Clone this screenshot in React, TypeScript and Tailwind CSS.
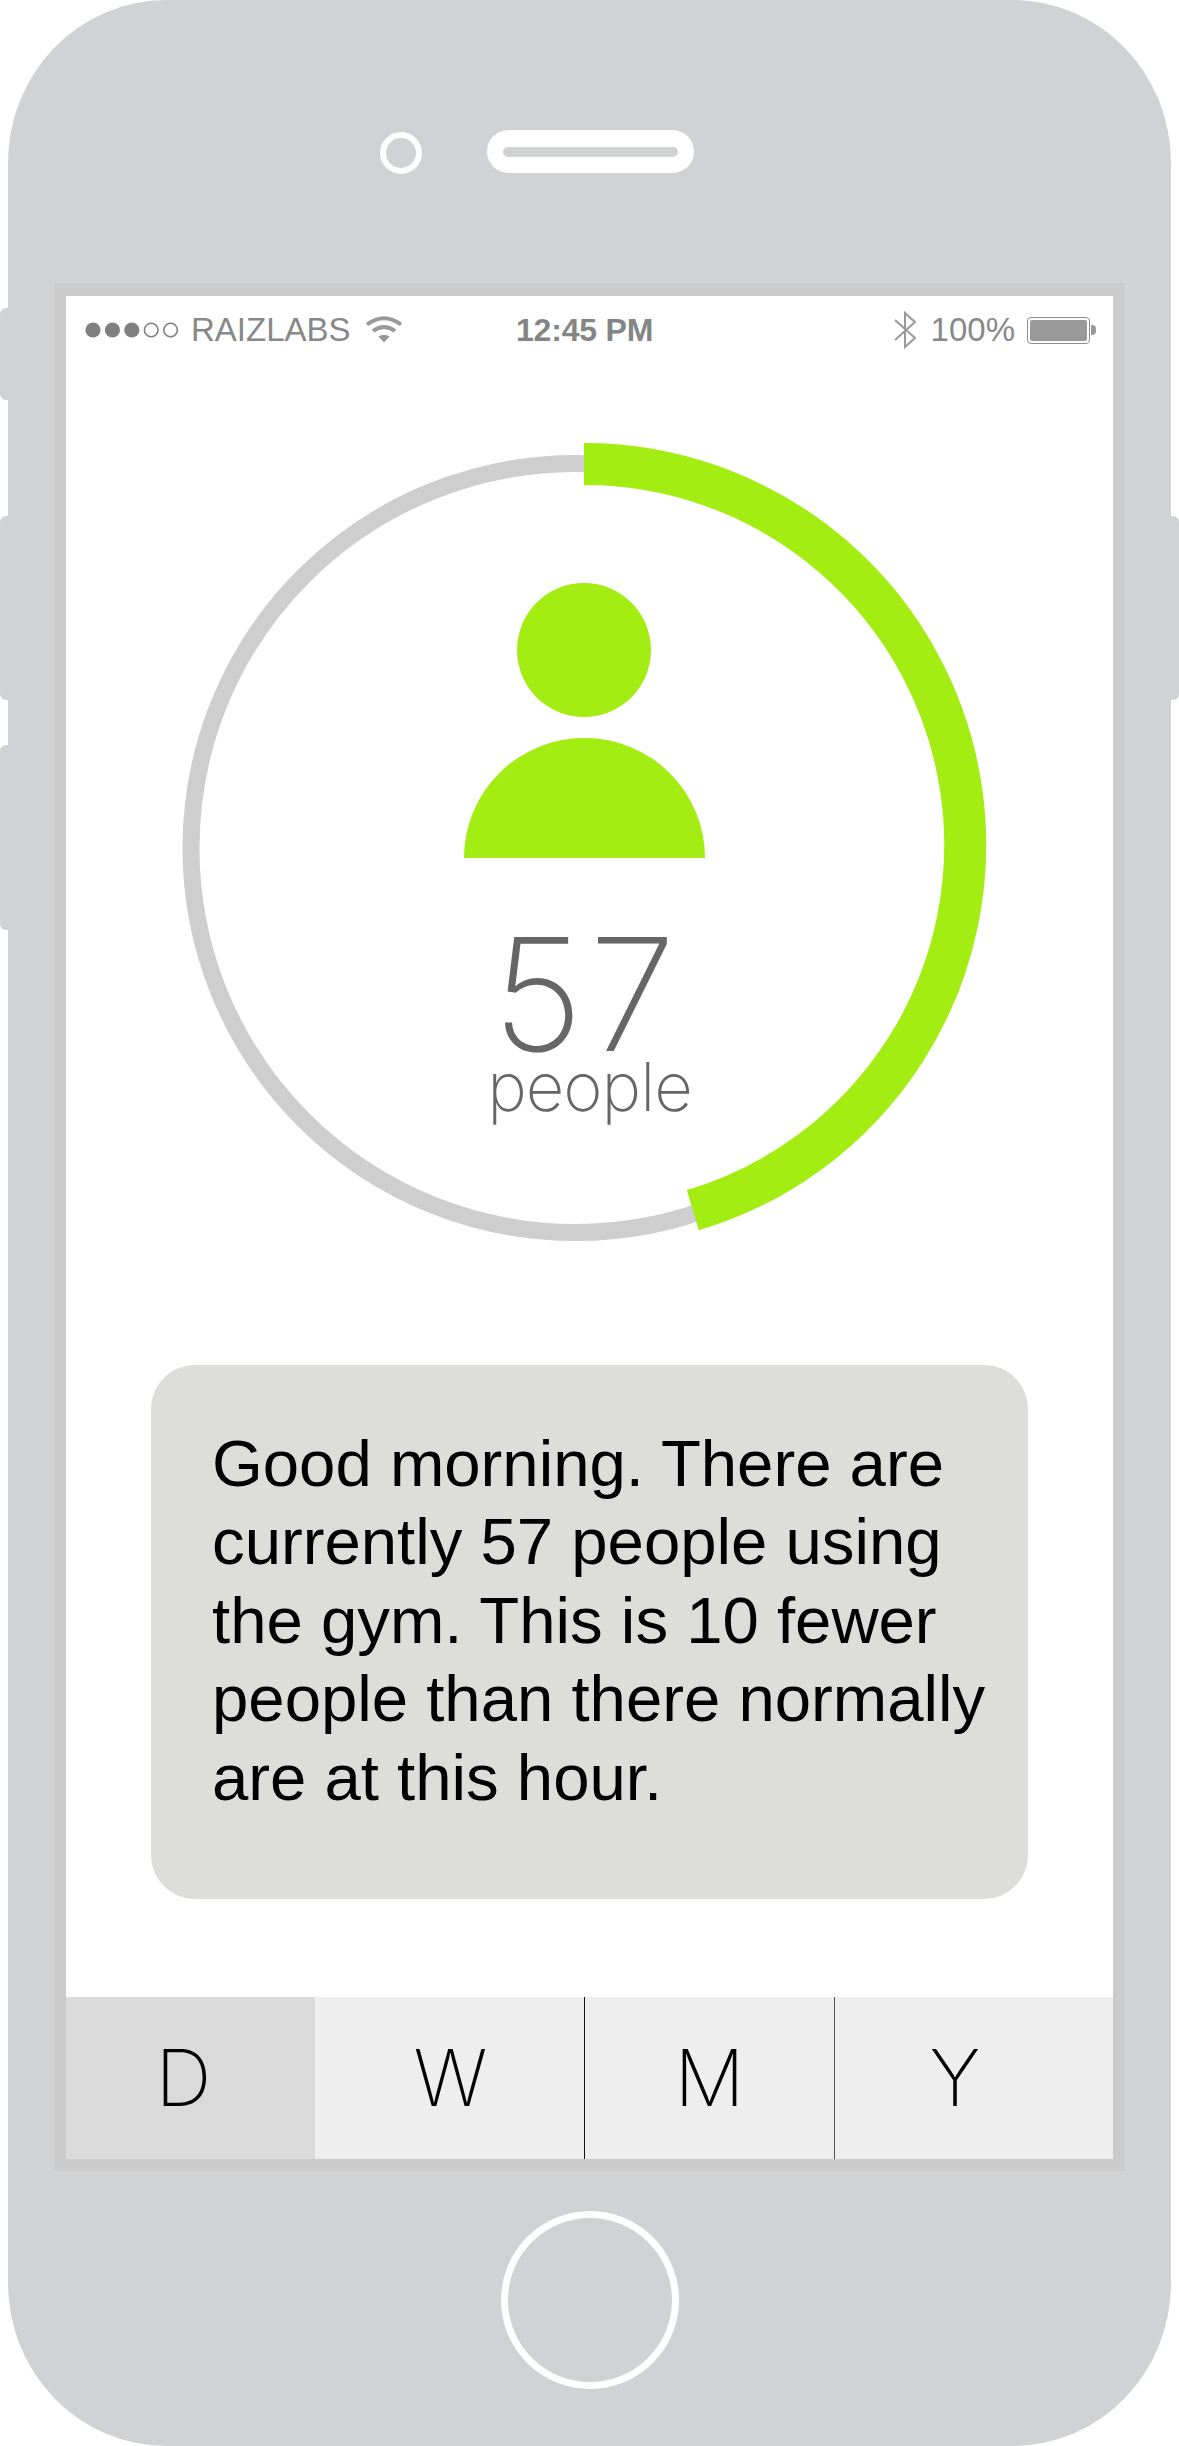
const SANS = "font-['Liberation_Sans',Arial,sans-serif]";

function SideButton({ side, className }: { side: "left" | "right"; className: string }) {
  return (
    <div
      className={`w-[8px] bg-[#d1d2d4] ${side === "left" ? "rounded-l-[6px]" : "rounded-r-[6px]"} ${className}`}
    />
  );
}

function Signal() {
  return (
    <svg width="95" height="18" viewBox="0 0 95 18" className="block">
      <circle cx="8" cy="9" r="7.6" fill="#808080" />
      <circle cx="27.4" cy="9" r="7.6" fill="#808080" />
      <circle cx="46.8" cy="9" r="7.6" fill="#808080" />
      <circle cx="66.2" cy="9" r="6.8" fill="none" stroke="#808080" strokeWidth="1.6" />
      <circle cx="85.6" cy="9" r="6.8" fill="none" stroke="#808080" strokeWidth="1.6" />
    </svg>
  );
}

function Wifi() {
  return (
    <svg width="38" height="28" viewBox="0 0 38 28" className="block">
      <path d="M2 9.5 Q19 -3 36 9.5" fill="none" stroke="#999999" strokeWidth="4" />
      <path d="M8 16 Q19 8 30 16" fill="none" stroke="#999999" strokeWidth="4" />
      <path d="M13.5 21.5 Q19 18 24.5 21.5 L19 27.5 Z" fill="#999999" />
    </svg>
  );
}

function Bluetooth() {
  return (
    <svg width="24" height="38" viewBox="0 0 24 38" className="block">
      <path
        d="M2 9 L22 27 L12 36 L12 2 L22 11 L2 29"
        fill="none"
        stroke="#999999"
        strokeWidth="2"
      />
    </svg>
  );
}

function Battery() {
  return (
    <div className="flex items-center">
      <div className="w-[63px] h-[27px] rounded-[4px] border-[1.5px] border-[#8e8e8e] p-[2px]">
        <div className="w-full h-full bg-[#999999] rounded-[2px]" />
      </div>
      <div className="w-[5px] h-[10px] bg-[#999999] rounded-r-[4px] ml-[1px]" />
    </div>
  );
}

function StatusBar() {
  return (
    <div className={`flex items-center h-[40px] mt-[14px] pl-[19px] pr-[17px] text-[33px] leading-[40px] text-[#888888] ${SANS}`}>
      <div className="w-[431px] flex items-center shrink-0">
        <Signal />
        <span className="ml-[11px]">RAIZLABS</span>
        <div className="ml-[14px] -mt-[2px]">
          <Wifi />
        </div>
      </div>
      <span className="font-bold text-[32px] tracking-[-0.2px] text-[#858585]">12:45 PM</span>
      <div className="ml-auto flex items-center">
        <Bluetooth />
        <span className="ml-[14px] mr-[12px]">100%</span>
        <Battery />
      </div>
    </div>
  );
}

function Gauge() {
  return (
    <section className="relative h-[1015px] flex flex-col items-center pr-[11px]">
      <svg
        className="absolute inset-0"
        width="1047"
        height="1015"
        viewBox="66 350 1047 1015"
      >
        <circle cx="575.5" cy="848" r="384.5" fill="none" stroke="#cecece" strokeWidth="17" />
        <path
          d="M584 464 A381 381 0 0 1 692.8 1210.2"
          fill="none"
          stroke="#a3ed12"
          strokeWidth="42"
        />
      </svg>
      <div className="relative mt-[233px] w-[134px] h-[134px] rounded-full bg-[#a3ed12]" />
      <div className="relative mt-[21px] w-[241px] h-[120px] rounded-t-[120px] bg-[#a3ed12]" />
      <span className="relative mt-[77px] ml-[6px] text-[157px] leading-[118px] tracking-[6px] text-[#666666] font-['Inter',sans-serif] font-extralight">
        57
      </span>
      <span className="relative mt-[2px] ml-[11px] text-[67px] leading-[64px] tracking-[-1px] text-[#666666] font-['Inter',sans-serif] font-extralight">
        people
      </span>
    </section>
  );
}

function Message() {
  return (
    <div className={`ml-[85px] w-[877px] h-[534px] rounded-[44px] bg-[#dddddc] pl-[61px] pt-[60px] text-[65.3px] leading-[78.4px] text-black ${SANS}`}>
      <p>Good morning. There are</p>
      <p>currently 57 people using</p>
      <p>the gym. This is 10 fewer</p>
      <p>people than there normally</p>
      <p>are at this hour.</p>
    </div>
  );
}

function Tabs() {
  const font = "text-[78px] leading-none text-black font-['Inter',sans-serif] font-extralight";
  return (
    <div className={`mt-auto h-[162px] flex ${font}`}>
      <div className="w-[249px] bg-[#dadada] flex items-center justify-center pr-[14px]">D</div>
      <div className="w-[270px] bg-[#eeeeee] border-r border-[#111111] flex items-center justify-center pl-[2px]">W</div>
      <div className="w-[250px] bg-[#eeeeee] border-r border-[#555555] flex items-center justify-center">M</div>
      <div className="flex-1 bg-[#eeeeee] flex items-center justify-center pr-[38px]">Y</div>
    </div>
  );
}

export default function App() {
  return (
    <div className="w-[1179px] h-[2446px] bg-white flex overflow-hidden">
      <div className="w-[8px] shrink-0 flex flex-col pt-[308px]">
        <SideButton side="left" className="h-[92px]" />
        <SideButton side="left" className="h-[184px] mt-[116px]" />
        <SideButton side="left" className="h-[185px] mt-[45px]" />
      </div>
      <div className="w-[1163px] h-[2446px] shrink-0 rounded-[158px/163px] bg-[#d1d2d4] flex flex-col">
        <div className="h-[43px] mt-[130px] flex items-center pl-[372px]">
          <div className="w-[42px] h-[42px] rounded-full border-[6px] border-white mt-[3px]" />
          <div className="ml-[65px] w-[207px] h-[43px] rounded-full bg-white flex items-center justify-center">
            <div className="w-[175px] h-[10px] rounded-full bg-[#d1d2d4]" />
          </div>
        </div>
        <div className="ml-[46px] mt-[110px] w-[1071px] h-[1888px] bg-[#cbcbcb] pt-[13px] px-[12px] pb-[12px]">
          <div className="w-[1047px] h-[1863px] bg-white flex flex-col">
            <StatusBar />
            <Gauge />
            <Message />
            <Tabs />
          </div>
        </div>
        <div className="mt-[40px] ml-[493px] w-[178px] h-[178px] rounded-full border-[7px] border-white" />
      </div>
      <div className="w-[8px] shrink-0 pt-[516px]">
        <SideButton side="right" className="h-[184px]" />
      </div>
    </div>
  );
}
